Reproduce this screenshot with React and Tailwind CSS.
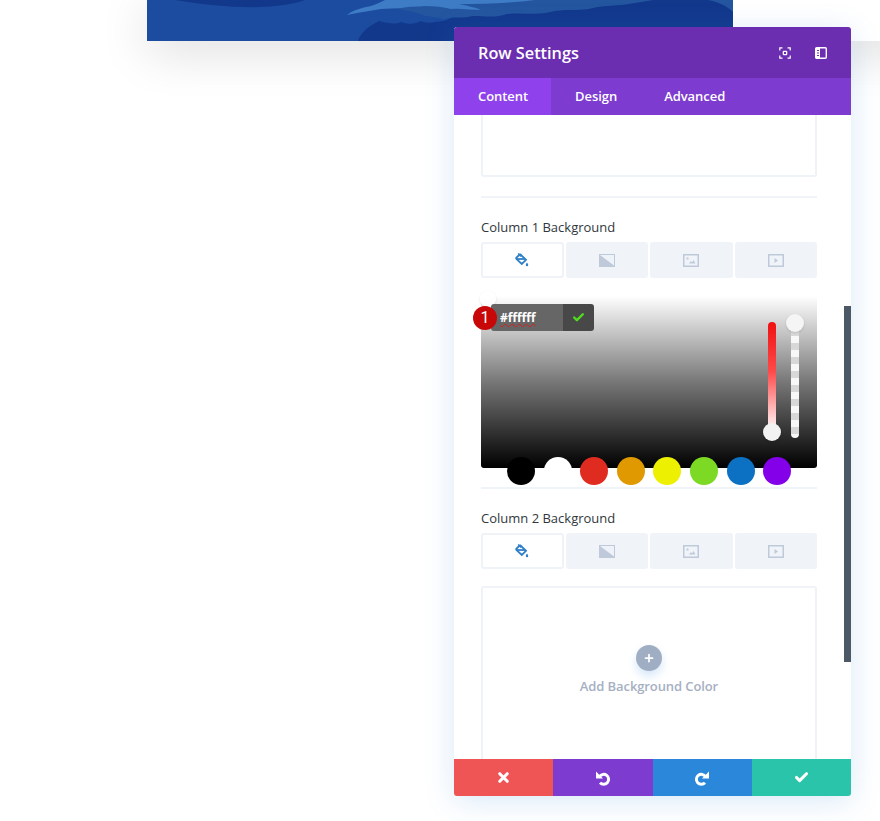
import { Check, Plus, X } from 'lucide-react'

const swatches = ['#000000', '#ffffff', '#e02b20', '#e09900', '#edf000', '#7cda24', '#0c71c3', '#8300e9']

function PaintIcon() {
  return (
    <svg width="14" height="14" viewBox="0 0 14 14" fill="none">
      <path d="M5.500 1.500 11 6.800 6.800 11 1.600 6.200c-.5-.5-.5-1.200 0-1.700l3-2.900Z" stroke="#2f7fc8" strokeWidth="1.800" />
      <path d="M2 6h8" stroke="#2f7fc8" strokeWidth="1.800" />
      <path d="M3.200 0.500 6 3.400" stroke="#2f7fc8" strokeWidth="1.500" />
      <path d="M12 9.500c.8 1.200 1.200 1.900 1.200 2.500a1.200 1.200 0 0 1-2.400 0c0-.6.4-1.300 1.200-2.500Z" fill="#2f7fc8" />
    </svg>
  )
}

function GradientIcon() {
  return (
    <svg width="16" height="13" viewBox="0 0 16 13">
      <rect width="16" height="13" fill="#bec9d9" />
      <path d="M1 1h14v10.500Z" fill="#eef3f9" />
    </svg>
  )
}

function ImageIcon() {
  return (
    <svg width="16" height="13" viewBox="0 0 16 13" fill="none">
      <rect x="0.750" y="0.750" width="14.500" height="11.500" stroke="#bec9d9" strokeWidth="1.500" />
      <rect x="3.500" y="3.500" width="2" height="2" fill="#bec9d9" />
      <path d="M6 9.500 8 7l1 1.500L10.500 6l2 3.500Z" fill="#bec9d9" />
    </svg>
  )
}

function VideoIcon() {
  return (
    <svg width="16" height="13" viewBox="0 0 16 13" fill="none">
      <rect x="0.750" y="0.750" width="14.500" height="11.500" stroke="#bec9d9" strokeWidth="1.500" />
      <path d="M6.500 4v5l3.500-2.500Z" fill="#bec9d9" />
    </svg>
  )
}

function UndoIcon({ flip }) {
  return (
    <svg width="16" height="16" viewBox="0 0 16 16" fill="none" className={flip ? '-scale-x-100' : ''}>
      <path d="M4.500 6.500A5 5 0 1 1 5 12.800" stroke="white" strokeWidth="3" />
      <path d="M1 1.500V8.500H8Z" fill="white" />
    </svg>
  )
}

function BackgroundTabs() {
  return (
    <div className="grid grid-cols-4 gap-[2px] h-9">
      <div className="flex items-center justify-center bg-white border-2 border-[#eff3f8] rounded-[3px]">
        <PaintIcon />
      </div>
      <div className="flex items-center justify-center bg-[#f0f4f9] rounded-[3px]">
        <GradientIcon />
      </div>
      <div className="flex items-center justify-center bg-[#f0f4f9] rounded-[3px]">
        <ImageIcon />
      </div>
      <div className="flex items-center justify-center bg-[#f0f4f9] rounded-[3px]">
        <VideoIcon />
      </div>
    </div>
  )
}

function ColorPicker() {
  return (
    <div className="relative h-[172px] rounded-b-[3px] bg-[linear-gradient(to_bottom,#ffffff,#777777_50%,#000000)]">
      <div className="absolute left-[-1px] top-[-5px] w-4 h-4 rounded-full bg-white/80 shadow-sm"></div>

      {/* hex input */}
      <div className="absolute left-[10px] top-[8px] flex w-[103px] h-[27px] rounded-[3px] overflow-hidden">
        <div className="flex-1 flex items-center pl-[9px] bg-[#666666] text-white text-[12px] font-bold">
          <span className="underline decoration-wavy decoration-[#d02020] decoration-1">#ffffff</span>
        </div>
        <div className="w-[31px] flex items-center justify-center bg-[#484848]">
          <Check size={13} strokeWidth={4.5} color="#4fdc1f" />
        </div>
      </div>

      {/* step badge */}
      <div className="absolute left-[-8px] top-[10px] w-6 h-6 rounded-full bg-[#c80808] flex items-center justify-center text-white text-[16px] leading-none font-['Roboto',sans-serif]">
        1
      </div>

      {/* hue slider */}
      <div className="absolute left-[287px] top-[26px] w-2 h-[110px] rounded-full bg-[linear-gradient(to_bottom,#f01010,#ff4a4a_45%,#ffffff)]"></div>
      <div className="absolute left-[282px] top-[127px] w-[18px] h-[18px] rounded-full bg-[#f2f2f2] shadow-sm"></div>

      {/* alpha slider */}
      <div className="absolute left-[310px] top-[26px] w-2 h-[116px] rounded-full bg-[repeating-linear-gradient(to_bottom,#f8f8f8_0px,#f8f8f8_7px,#d8d8d8_7px,#d8d8d8_14px)]"></div>
      <div className="absolute left-[305px] top-[18px] w-[18px] h-[18px] rounded-full bg-[#f5f5f5] shadow-sm"></div>

      {/* saved colours */}
      <div className="absolute left-[26px] top-[161px] flex gap-[8.6px]">
        {swatches.map((color) => (
          <div key={color} className="w-[28px] h-[28px] rounded-full" style={{ backgroundColor: color }}></div>
        ))}
      </div>
    </div>
  )
}

export default function App() {
  return (
    <div className="relative h-[821px] w-[880px] overflow-hidden bg-white font-['Open_Sans',sans-serif]">
      {/* Page section behind the modal */}
      <div className="ml-[147px] w-[800px] h-[41px] bg-white shadow-[0_10px_50px_rgba(0,0,0,0.14)]">
        <div className="w-[586px] h-[41px] bg-[#1c4c9f] overflow-hidden">
          <svg width="586" height="41" viewBox="0 0 586 41">
            <path d="M28 0c35 6 75 9 100 6 12-1 22-3 30-6Z" fill="#12388c" />
            <path d="M211 41c2-7 8-13 21-20 8 2 16 4 22 1 8 3 14 2 20-1 6 3 14 1 22 0 6-1 8-4 14-5l24-1 20-2 30-1 30-4 20-3 30-5h132v41Z" fill="#12388c" />
            <path d="M296 19c10-3 20 0 30-3 14 0 22 2 34-2 16-2 30 2 48-3 14-2 26 0 38-3 12-3 26-2 36-4l24-4H262c-6 3-14 5-24 7 14 3 28 3 40 9 6 0 12 2 18 3Z" fill="#24569f" />
            <path d="M200 15c6-5 14-7 24-9 6-2 10-4 14-6h150c-22 3-50 4-76 4 8 2 16 3 22 6-10 0-20-2-30-1-8-2-16-3-26-3-8 1-14 0-24 2l-20 1-12 2-12 2Z" fill="#3f7cc6" />
            <path d="M560 0c10 1 20 6 26 12v-12Z" fill="#24569f" />
          </svg>
        </div>
      </div>

      {/* Row settings modal */}
      <div className="absolute left-[454px] top-[27px] w-[397px] h-[769px] flex flex-col rounded-[3px] bg-white shadow-[0_5px_30px_rgba(43,135,218,0.18)]">
        <div className="h-[51px] shrink-0 flex items-center justify-between pl-6 pr-6 bg-[#6c2eb0] rounded-t-[3px]">
          <span className="pt-[2px] text-white text-[16.3px] font-semibold">Row Settings</span>
          <div className="flex items-center gap-6">
            <svg width="12" height="12" viewBox="0 0 12 12" fill="none" stroke="white" strokeWidth="1.200">
              <path d="M3.500 .8H.8v2.700M8.500.8h2.700v2.700M3.500 11.200H.8V8.500M8.500 11.200h2.700V8.500" />
              <rect x="3.700" y="3.700" width="4.600" height="4.600" fill="white" stroke="none" rx="1" />
              <rect x="5" y="5" width="2" height="2" fill="#6c2eb0" stroke="none" />
            </svg>
            <svg width="12" height="12" viewBox="0 0 12 12" fill="none">
              <rect x=".7" y=".7" width="10.600" height="10.600" rx="1" stroke="white" strokeWidth="1.400" />
              <rect x="1" y="1" width="4" height="10" fill="white" />
              <path d="M2 3.500h2M2 6h2M2 8.500h2" stroke="#6c2eb0" strokeWidth="1" />
            </svg>
          </div>
        </div>

        <div className="h-[37px] shrink-0 flex bg-[#7d3bcf] pt-[1px] text-white text-[13px] font-semibold tracking-[-0.05px]">
          <div className="w-[97px] -mt-[1px] flex items-center pl-6 pt-[1px] bg-[#8f42ec]">Content</div>
          <div className="flex items-center pl-6">Design</div>
          <div className="flex items-center pl-[47px]">Advanced</div>
        </div>

        <div className="relative flex-1 overflow-hidden pl-[27px] pr-[34px] text-[#32373c]">
          <div className="h-[63px] -mt-px bg-white border-2 border-t-0 border-[#eff3f8] rounded-b-[3px]"></div>
          <div className="h-[2px] mt-[19px] bg-[#f0f4f9]"></div>

          <div className="mt-[19px] h-[20px] text-[13px] font-medium leading-[20px]">Column 1 Background</div>
          <div className="mt-[5px]"><BackgroundTabs /></div>
          <div className="mt-[18px]"><ColorPicker /></div>
          <div className="h-[2px] mt-[19px] bg-[#f0f4f9]"></div>

          <div className="mt-[19px] h-[20px] text-[13px] font-medium leading-[20px]">Column 2 Background</div>
          <div className="mt-[5px]"><BackgroundTabs /></div>

          <div className="mt-[17px] h-[180px] flex flex-col items-center bg-white border-2 border-b-0 border-[#eff3f8] rounded-t-[3px]">
            <div className="mt-[57px] w-[26px] h-[26px] rounded-full bg-[#a0aec4] flex items-center justify-center shadow-[0_5px_10px_rgba(43,135,218,0.2)]">
              <Plus size={12} strokeWidth={3.5} color="white" />
            </div>
            <div className="mt-[6px] text-[13px] font-semibold tracking-[-0.1px] text-[#a5b0c3]">Add Background Color</div>
          </div>

          {/* scrollbar */}
          <div className="absolute right-0 top-[191px] w-[7px] h-[356px] bg-[#4c5866]"></div>
        </div>

        <div className="h-[37px] shrink-0 grid grid-cols-4 rounded-b-[3px] overflow-hidden">
          <div className="flex items-center justify-center bg-[#ef5555]"><X size={15} strokeWidth={5} color="white" /></div>
          <div className="flex items-center justify-center bg-[#7d3bcf]"><UndoIcon /></div>
          <div className="flex items-center justify-center bg-[#2b87da]"><UndoIcon flip /></div>
          <div className="flex items-center justify-center bg-[#29c4a9]"><Check size={15} strokeWidth={5} color="white" /></div>
        </div>
      </div>
    </div>
  )
}
